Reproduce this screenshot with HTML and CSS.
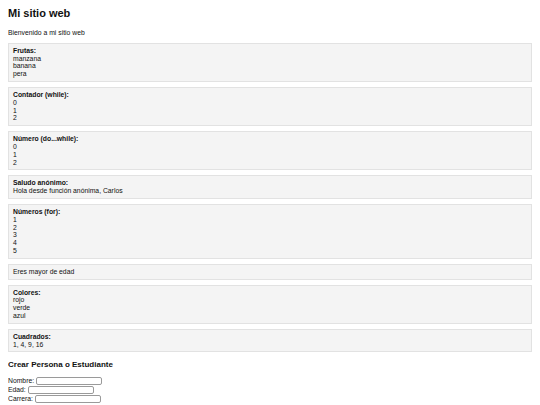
FILE: index.html
```html
<!DOCTYPE html>
<html lang="es">
<head>
<meta charset="utf-8">
<title>Mi sitio web</title>
<link rel="stylesheet" href="styles.css">
</head>
<body>
<h1 class="title">Mi sitio web</h1>
<p class="intro">Bienvenido a mi sitio web</p>

<div class="card"><strong>Frutas:</strong><br>manzana<br>banana<br>pera</div>
<div class="card"><strong>Contador (while):</strong><br>0<br>1<br>2</div>
<div class="card"><strong>Número (do...while):</strong><br>0<br>1<br>2</div>
<div class="card"><strong>Saludo anónimo:</strong><br>Hola desde función anónima, Carlos</div>
<div class="card"><strong>Números (for):</strong><br>1<br>2<br>3<br>4<br>5</div>
<div class="card">Eres mayor de edad</div>
<div class="card"><strong>Colores:</strong><br>rojo<br>verde<br>azul</div>
<div class="card"><strong>Cuadrados:</strong><br>1, 4, 9, 16</div>

<h2 class="subtitle">Crear Persona o Estudiante</h2>
<form class="form">
  <div class="row"><label>Nombre:</label> <input type="text" class="field"></div>
  <div class="row"><label>Edad:</label> <input type="text" class="field"></div>
  <div class="row"><label>Carrera:</label> <input type="text" class="field"></div>
</form>
</body>
</html>
```

FILE: styles.css
```css
html, body {
  background: #ffffff;
}
body {
  margin: 8px;
  font-family: "Liberation Sans", Arial, sans-serif;
  font-size: 6.8px;
  line-height: 7.8px;
  color: #111111;
}
.title {
  font-size: 11px;
  line-height: 11px;
  font-weight: bold;
  margin: 0 0 10px 0;
  color: #111111;
}
.intro {
  margin: 0 0 6px 0;
}
.card {
  background: #f4f4f4;
  border: 1px solid #e2e2e2;
  padding: 3px 4px;
  margin-bottom: 5px;
}
.card strong {
  font-weight: bold;
}
.subtitle {
  font-size: 8px;
  line-height: 9px;
  font-weight: bold;
  margin: 8px 0 7px 0;
}
.form {
  margin: 0;
}
.row {
  height: 9px;
  line-height: 9px;
  display: flex;
  align-items: center;
  gap: 2px;
}
.field {
  box-sizing: border-box;
  width: 66px;
  height: 8px;
  padding: 0;
  margin: 0;
  border: 1px solid #9a9a9a;
  border-radius: 2px;
  background: #ffffff;
  font-size: 6px;
}
```
